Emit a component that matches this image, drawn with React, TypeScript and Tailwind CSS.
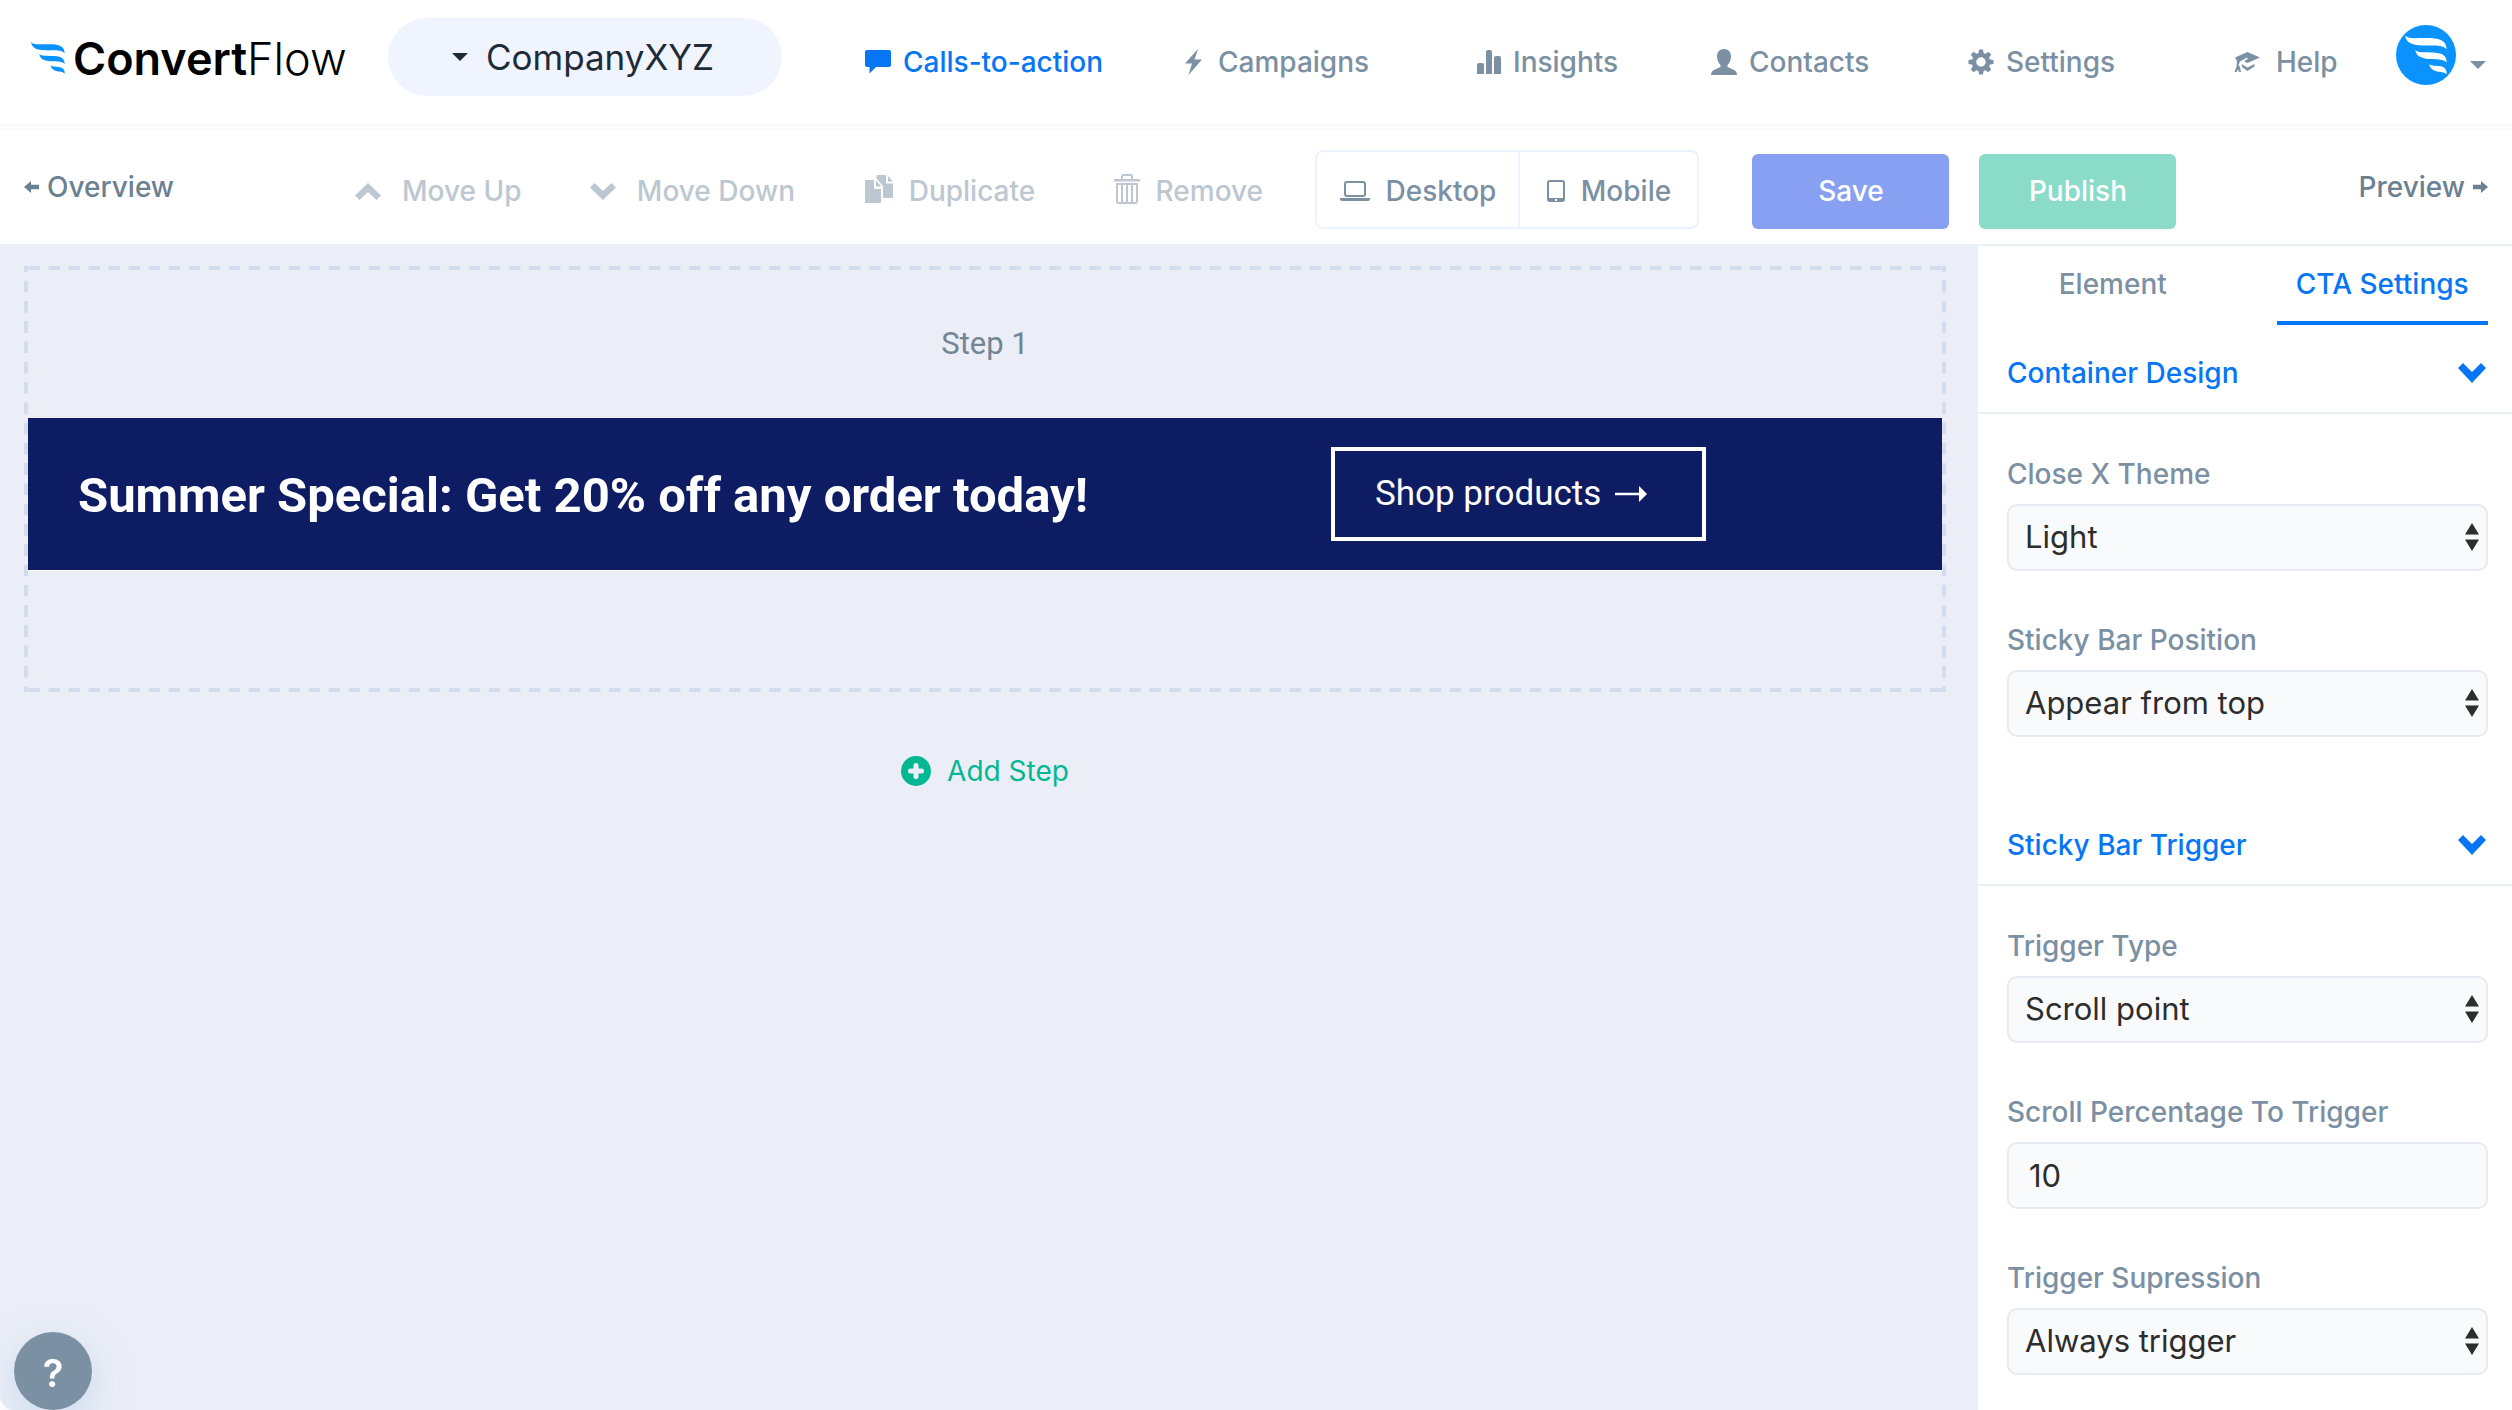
import type { ReactNode } from 'react';

function Wing({ className }: { className: string }) {
  return (
    <svg viewBox="34 66 102 96" className={className} fill="currentColor" aria-hidden="true">
      <path d="M34 66C40 74 51 73 72 73C102 72 135 71 135 100C123 88 100 92 76 91C50 90 37 84 34 66Z" />
      <path d="M59 102C66 109 80 107 95 108C120 108 135 112 135 132C123 122 110 126 92 124C72 122 61 116 59 102Z" />
      <path d="M93 136C98 141 108 140 116 141C130 142 136 150 135 161C128 154 120 156 112 154C100 151 94 146 93 136Z" />
    </svg>
  );
}

function Icon({ className, viewBox, children }: { className: string; viewBox: string; children: ReactNode }) {
  return (
    <svg viewBox={viewBox} className={`shrink-0 ${className}`} fill="currentColor" aria-hidden="true">
      {children}
    </svg>
  );
}

const gearTeeth = [0, 45, 90, 135, 180, 225, 270, 315];

const navItems = [
  {
    label: 'Calls-to-action',
    gap: 'gap-3',
    active: true,
    icon: (
      <Icon viewBox="0 0 26 24" className="w-[26px] h-6">
        <path d="M2 0H24Q26 0 26 2V15Q26 17 24 17H11L4.500 23.500V17H2Q0 17 0 15V2Q0 0 2 0Z" />
      </Icon>
    )
  },
  {
    label: 'Campaigns',
    gap: 'gap-4',
    icon: (
      <Icon viewBox="0 0 17 26" className="w-[17px] h-[26px]">
        <path d="M13 0L0 14.500H7L3.500 26L17 10.500H9.500Z" />
      </Icon>
    )
  },
  {
    label: 'Insights',
    gap: 'gap-3',
    icon: (
      <Icon viewBox="0 0 24 24" className="w-6 h-6">
        <path d="M0 24V15Q0 13 2 13H5Q7 13 7 15V24ZM9 24V2Q9 0 11 0H13Q15 0 15 2V24ZM17 24V8Q17 6 19 6H22Q24 6 24 8V24Z" />
      </Icon>
    )
  },
  {
    label: 'Contacts',
    gap: 'gap-3',
    icon: (
      <Icon viewBox="0 0 26 26" className="w-[26px] h-[26px]">
        <path d="M13 0C17.500 0 20 3 20 7.500C20 11 18.500 14 16.500 16V18L24 21.500Q26 22.500 26 26H0Q0 22.500 2 21.500L9.500 18V16C7.500 14 6 11 6 7.500C6 3 8.500 0 13 0Z" />
      </Icon>
    )
  },
  {
    label: 'Settings',
    gap: 'gap-3',
    icon: (
      <Icon viewBox="0 0 26 26" className="w-[26px] h-[26px]">
        <circle cx="13" cy="13" r="7" fill="none" stroke="currentColor" strokeWidth="4.500" />
        {gearTeeth.map((angle) => (
          <path key={angle} d="M10.200 5L11 0.500H15L15.800 5Z" transform={`rotate(${angle} 13 13)`} />
        ))}
      </Icon>
    )
  },
  {
    label: 'Help',
    gap: 'gap-4',
    icon: (
      <Icon viewBox="0 0 26 21" className="w-[26px] h-[21px]">
        <path d="M13.500 0L26 5.500L13.500 11L10 9.500L14 6.500L13 5.500L6 9.500L4.500 13L6 15L7 20H5L4 17.500L2.500 20H0.500L2.500 14.500L3 9L1 5.500Z" />
        <path d="M7.500 12L13.500 15.500L20.500 12V14.500L13.500 19L8 15Z" />
      </Icon>
    )
  }
];

const editActions = [
  {
    label: 'Move Up',
    gap: 'gap-5',
    icon: (
      <Icon viewBox="0 0 26 17" className="w-[26px] h-[17px] mr-px">
        <path d="M13 0L26 12.500L21.500 17L13 9L4.500 17L0 12.500Z" />
      </Icon>
    )
  },
  {
    label: 'Move Down',
    gap: 'gap-5',
    icon: (
      <Icon viewBox="0 0 26 17" className="w-[26px] h-[17px] mr-px">
        <path d="M13 17L26 4.500L21.500 0L13 8L4.500 0L0 4.500Z" />
      </Icon>
    )
  },
  {
    label: 'Duplicate',
    gap: 'gap-4',
    icon: (
      <Icon viewBox="0 0 28 28" className="w-7 h-7 mb-1">
        <path d="M0 5H9V14H16V28H0ZM11 5L16 11.500H11Z" />
        <path d="M11.500 0H21V8.500H28V23H18V11L11.500 3.500ZM23 1L28 6.500H23Z" />
      </Icon>
    )
  },
  {
    label: 'Remove',
    gap: 'gap-4',
    icon: (
      <Icon viewBox="0 0 26 30" className="w-[26px] h-[30px] mb-1">
        <path d="M0 5H26V7.500H0Z" />
        <path d="M8 5.500V2.500Q8 1 9.500 1H16.500Q18 1 18 2.500V5.500" fill="none" stroke="currentColor" strokeWidth="2" />
        <path d="M3 10H23V27Q23 29 21 29H5Q3 29 3 27ZM8 10V29M13 10V29M18 10V29" fill="none" stroke="currentColor" strokeWidth="2" />
      </Icon>
    )
  }
];

function Arrow({ className = '' }: { className?: string }) {
  return (
    <Icon viewBox="0 0 15 12" className={`w-[15px] h-3 ${className}`}>
      <path d="M0 3.800H8V0L15 6L8 12V8.200H0Z" />
    </Icon>
  );
}

function Section({ title, children }: { title: string; children: ReactNode }) {
  return (
    <section>
      <button className="flex w-full h-20 items-center justify-between border-b-2 border-[#eaf0f9] pl-[29px] pr-[26px] text-[28px] font-medium text-[#0676f5]">
        {title}
        <Icon viewBox="0 0 28 20" className="w-7 h-5">
          <path d="M14 20L28 5L23 0L14 9L5 0L0 5Z" />
        </Icon>
      </button>
      <div className="flex flex-col gap-[49px] pt-10 pl-[29px] pr-6">{children}</div>
    </section>
  );
}

const labelClass = 'block leading-10 mb-[10px] text-[28px] font-medium text-[#7b90a3]';
const fieldClass = 'block w-full h-[67px] appearance-none rounded-[10px] border-2 border-[#e6eaf1] bg-[#f9fafc] text-[31px] text-[#2d2d2d]';

function SelectField({ id, label, value }: { id: string; label: string; value: string }) {
  return (
    <div>
      <label htmlFor={id} className={labelClass}>{label}</label>
      <div className="relative">
        <select id={id} className={`${fieldClass} pl-4 pr-12`}>
          <option>{value}</option>
        </select>
        <svg viewBox="0 0 14 28" className="pointer-events-none absolute right-[9px] top-[19px] w-[14px] h-7" fill="#2d2d2d" aria-hidden="true">
          <path d="M7 0L14 11.500H0ZM7 28L14 16.500H0Z" />
        </svg>
      </div>
    </div>
  );
}

export default function App() {
  return (
    <div className="flex min-h-screen flex-col bg-white font-['Inter',sans-serif] text-[28px] text-[#7b90a3]">
      <header className="flex h-[126px] items-center border-b-2 border-[#f8f9fb] pl-[31px] pr-[26px]">
        <a href="#" className="flex w-[357px] items-center gap-2 pb-2">
          <Wing className="w-[34px] h-8 text-[#0a93ff]" />
          <span className="text-[45px] leading-none text-black">
            <span className="font-semibold">Convert</span>
            <span className="font-light">Flow</span>
          </span>
        </a>
        <button className="mr-[83px] mb-[10px] flex h-[78px] w-[394px] items-center justify-center gap-[18px] rounded-full bg-[#eff4ff] pr-1 text-[35px] text-[#1f2b37]">
          <Icon viewBox="0 0 16 8" className="w-4 h-2">
            <path d="M0 0H16L8 8Z" />
          </Icon>
          CompanyXYZ
        </button>
        <nav className="grid flex-1 grid-cols-[320fr_292fr_234fr_257fr_266fr_162fr] font-medium">
          {navItems.map((item) => (
            <a key={item.label} href="#" className={`flex items-center whitespace-nowrap ${item.gap} ${item.active ? 'text-[#0676f5]' : ''}`}>
              {item.icon}
              {item.label}
            </a>
          ))}
        </nav>
        <button aria-label="Account" className="mb-[14px] flex items-center gap-[14px]">
          <span className="flex h-[60px] w-[60px] items-center justify-center rounded-full bg-[#0a93ff] text-white">
            <Wing className="w-[42px] h-10" />
          </span>
          <Icon viewBox="0 0 16 8" className="mt-5 w-4 h-2">
            <path d="M0 0H16L8 8Z" />
          </Icon>
        </button>
      </header>

      <div className="mt-[2px] flex h-[118px] items-center border-t-2 border-b-2 border-t-[#f8f9fb] border-b-[#eaf0f9] pl-6 pr-6 font-medium">
        <a href="#" className="flex w-[331px] items-center gap-2 text-[#6b8091]">
          <Arrow className="rotate-180" />
          Overview
        </a>
        <div className="grid flex-1 grid-cols-[235fr_275fr_249fr_202fr] pt-2">
          {editActions.map((action) => (
            <button key={action.label} className={`flex items-center whitespace-nowrap text-[#bdc7d1] ${action.gap}`}>
              {action.icon}
              {action.label}
            </button>
          ))}
        </div>
        <div className="mt-1 flex h-[79px] rounded-lg border-2 border-[#edf3fc]">
          <button className="flex w-[203px] items-center justify-center gap-4 border-r-2 border-[#edf3fc] pt-1">
            <Icon viewBox="0 0 30 20" className="w-[30px] h-5">
              <rect x="5" y="1" width="20" height="14" rx="2" fill="none" stroke="currentColor" strokeWidth="2" />
              <path d="M0 17H30V18Q30 20 28 20H2Q0 20 0 18Z" />
            </Icon>
            Desktop
          </button>
          <button className="flex w-[177px] items-center justify-center gap-4 pt-1">
            <Icon viewBox="0 0 18 22" className="w-[18px] h-[22px]">
              <path fillRule="evenodd" d="M3 0H15Q18 0 18 3V19Q18 22 15 22H3Q0 22 0 19V3Q0 0 3 0ZM2 3V18H16V3Q16 2 15 2H3Q2 2 2 3ZM8 19H10V21H8Z" />
            </Icon>
            Mobile
          </button>
        </div>
        <button className="mt-2 ml-[53px] h-[75px] w-[197px] rounded-md bg-[#88a0f2] text-white">Save</button>
        <button className="mt-2 ml-[30px] h-[75px] w-[197px] rounded-md bg-[#8adbc8] text-white">Publish</button>
        <a href="#" className="ml-[182px] flex items-center gap-2 text-[#6b8091]">
          Preview
          <Arrow />
        </a>
      </div>

      <div className="flex flex-1">
        <main className="flex-1 rounded-bl-2xl bg-[#ebeef6] pt-5 pl-6 pr-8">
          {/* dashed frame, drawn as four strips so that the dashes stay long */}
          <div className="h-[426px] p-1 [background:linear-gradient(90deg,#d2dcec_30%,transparent_30%_70%,#d2dcec_70%)_top/20px_4px_round_no-repeat,linear-gradient(90deg,#d2dcec_30%,transparent_30%_70%,#d2dcec_70%)_bottom/20px_4px_round_no-repeat,linear-gradient(#d2dcec_30%,transparent_30%_70%,#d2dcec_70%)_left/4px_20px_no-repeat_round,linear-gradient(#d2dcec_30%,transparent_30%_70%,#d2dcec_70%)_right/4px_20px_no-repeat_round]">
            <div className="flex h-[148px] items-center justify-center font-['Roboto',sans-serif] text-[31px] text-[#728594]">Step 1</div>
            <div className="grid h-[153px] grid-cols-[1303fr_611fr] items-center border-b border-white bg-[#0e1c64] font-['Roboto',sans-serif] text-white">
              <h1 className="pt-1 pl-[50px] text-[49px] font-bold whitespace-nowrap">Summer Special: Get 20% off any order today!</h1>
              <button className="flex h-[94px] w-[375px] items-center gap-[14px] border-4 border-white pl-10 text-[35px] whitespace-nowrap">
                Shop products
                <Icon viewBox="0 0 32 16" className="w-8 h-4">
                  <path d="M0 6.700H24V0L32 8L24 16V9.300H0Z" />
                </Icon>
              </button>
            </div>
          </div>
          <button className="mx-auto mt-[58px] flex items-center gap-4 text-[#04b793]">
            <Icon viewBox="0 0 30 30" className="w-[30px] h-[30px]">
              <circle cx="15" cy="15" r="15" />
              <path d="M15 9.500V20.500M9.500 15H20.500" stroke="#ebeef6" strokeWidth="5" strokeLinecap="round" />
            </Icon>
            Add Step
          </button>
        </main>

        <aside className="flex w-[534px] shrink-0 flex-col pb-9">
          <div className="mb-[9px] grid h-[79px] grid-cols-2 gap-[58px] pl-[29px] pr-6 font-medium">
            <button className="border-b-4 border-transparent">Element</button>
            <button className="border-b-4 border-[#0676f5] whitespace-nowrap text-[#0676f5]">CTA Settings</button>
          </div>
          <div className="flex flex-col gap-[69px]">
            <Section title="Container Design">
              <SelectField id="close-theme" label="Close X Theme" value="Light" />
              <SelectField id="bar-position" label="Sticky Bar Position" value="Appear from top" />
            </Section>
            <Section title="Sticky Bar Trigger">
              <SelectField id="trigger-type" label="Trigger Type" value="Scroll point" />
              <div>
                <label htmlFor="scroll-percentage" className={labelClass}>Scroll Percentage To Trigger</label>
                <input id="scroll-percentage" type="text" defaultValue="10" className={`${fieldClass} px-5`} />
              </div>
              <SelectField id="trigger-suppression" label="Trigger Supression" value="Always trigger" />
            </Section>
          </div>
        </aside>
      </div>

      <button aria-label="Help" className="fixed bottom-0 left-[14px] h-[78px] w-[78px] rounded-full bg-[#7b90a2] pt-1 text-[38px] font-semibold text-white shadow-[0_12px_36px_rgba(170,200,235,0.5)]">
        ?
      </button>
    </div>
  );
}
